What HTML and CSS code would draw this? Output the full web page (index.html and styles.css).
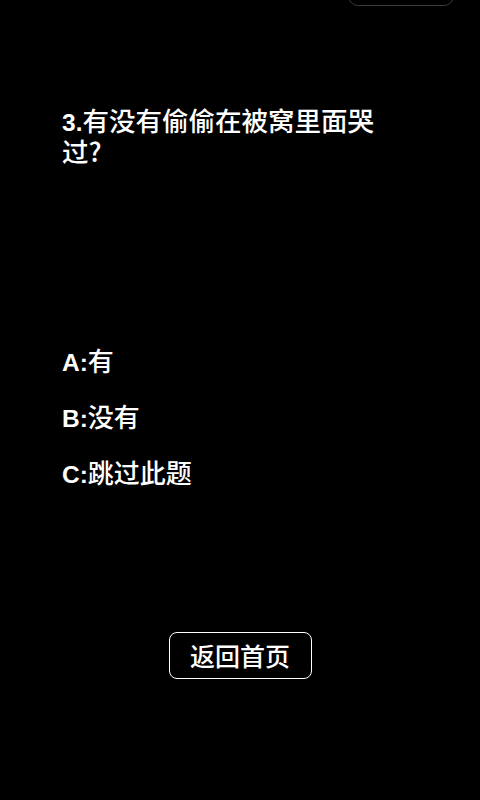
FILE: index.html
```html
<!DOCTYPE html>
<html lang="zh-CN">
<head>
<meta charset="utf-8">
<link rel="stylesheet" href="styles.css">
</head>
<body>
<div class="page">
  <div class="topbar"><div class="topbtn"></div></div>
  <div class="question"><span class="num">3.</span>有没有偷偷在被窝里面哭过?</div>
  <div class="options">
    <div class="option"><span class="num">A:</span>有</div>
    <div class="option"><span class="num">B:</span>没有</div>
    <div class="option"><span class="num">C:</span>跳过此题</div>
  </div>
  <div class="footer"><div class="home">返回首页</div></div>
</div>
</body>
</html>
```
FILE: styles.css
```css
html, body {
  margin: 0;
  padding: 0;
  background: #000;
  color: #fff;
  font-family: "Noto Sans CJK SC", "Liberation Sans", sans-serif;
}
.page {
  width: 480px;
  height: 800px;
  display: flex;
  flex-direction: column;
  overflow: hidden;
}
.topbar {
  display: flex;
  justify-content: flex-end;
  padding-right: 26px;
  height: 4px;
}
.topbtn {
  width: 104px;
  height: 40px;
  margin-top: -36px;
  border: 1.5px solid #3a3a3a;
  border-radius: 10px;
  flex-shrink: 0;
}
.question {
  margin: 101px 0 0 62px;
  width: 330px;
  font-size: 26.5px;
  line-height: 30px;
  font-weight: 500;
}
.num {
  font-family: "Liberation Sans", sans-serif;
  font-weight: 700;
  font-size: 24.5px;
  line-height: 1;
}
.options {
  margin: 177px 0 0 62px;
  display: flex;
  flex-direction: column;
  gap: 22px;
}
.option {
  font-size: 26px;
  line-height: 34px;
  font-weight: 500;
}
.footer {
  display: flex;
  justify-content: center;
  margin-top: 143px;
}
.home {
  width: 141px;
  height: 45px;
  border: 1.5px solid #fff;
  border-radius: 8px;
  display: flex;
  align-items: center;
  justify-content: center;
  font-size: 25px;
  font-weight: 500;
}
```
